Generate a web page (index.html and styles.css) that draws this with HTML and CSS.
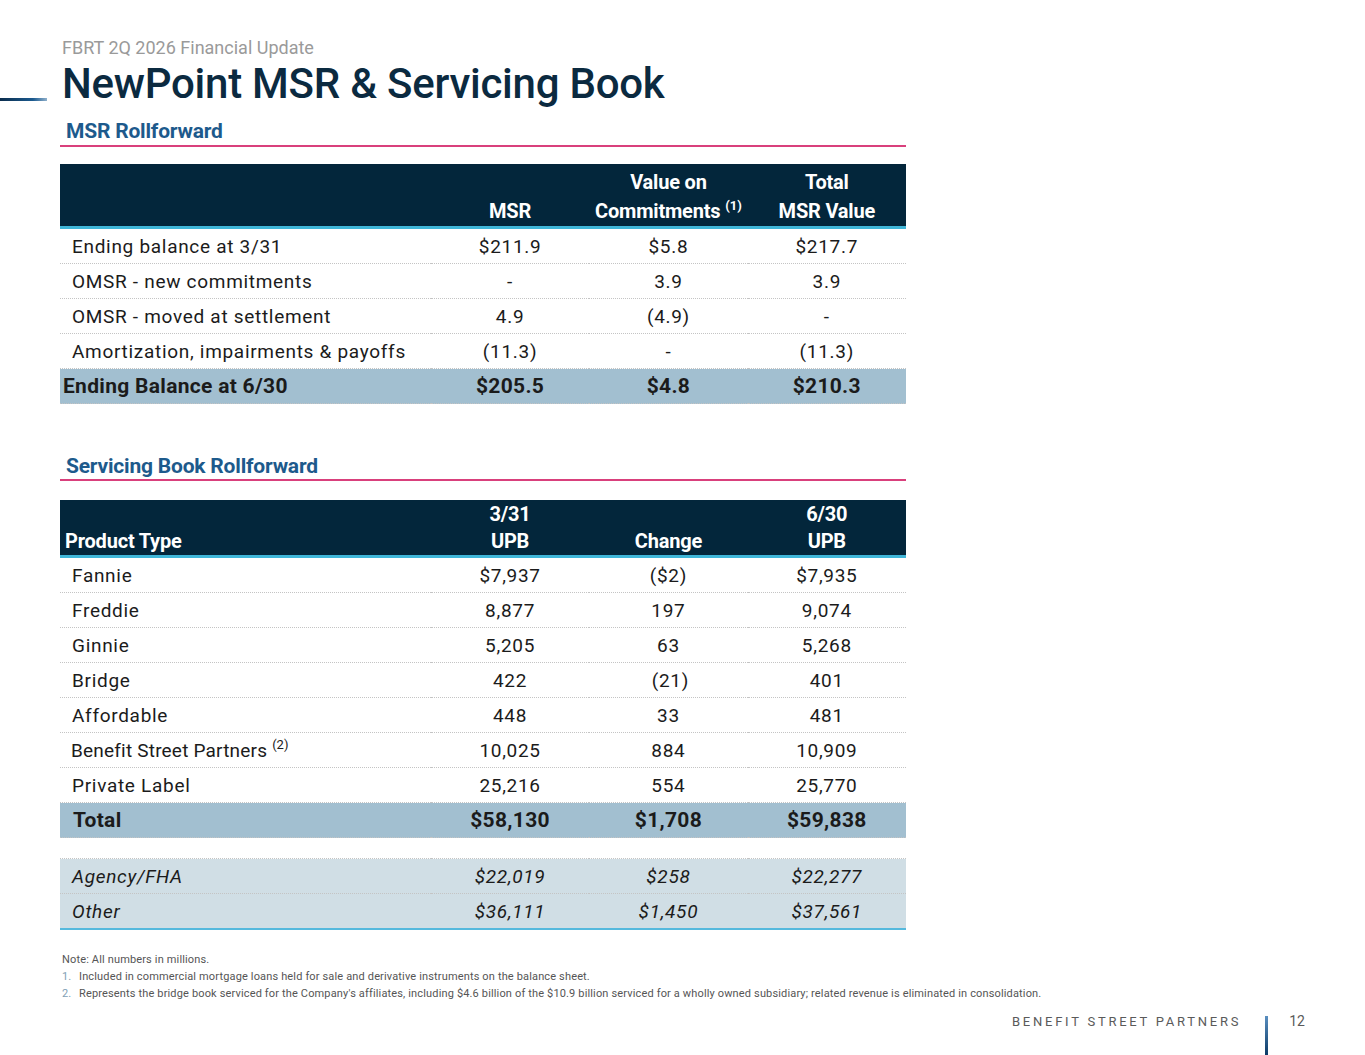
FILE: index.html
```html
<!DOCTYPE html>
<html lang="en">
<head>
    <meta charset="UTF-8">
    <title>NewPoint MSR &amp; Servicing Book</title>
    <link rel="stylesheet" href="styles.css">
</head>
<body>
<div class="page">

    <header class="slide-head">
        <div class="subtitle">FBRT 2Q 2026 Financial Update</div>
        <div class="title-row">
            <div class="title-bar"></div>
            <h1>NewPoint MSR &amp; Servicing Book</h1>
        </div>
    </header>

    <main class="content">

        <!-- MSR table -->
        <h2 class="section-title">MSR Rollforward</h2>
        <table class="data msr">
            <colgroup>
                <col class="c-label"><col class="c-num"><col class="c-num"><col class="c-num">
            </colgroup>
            <thead>
                <tr>
                    <th></th>
                    <th>MSR</th>
                    <th>Value on<br>Commitments <sup>(1)</sup></th>
                    <th>Total<br>MSR Value</th>
                </tr>
            </thead>
            <tbody>
                <tr><td>Ending balance at 3/31</td><td>$211.9</td><td>$5.8</td><td>$217.7</td></tr>
                <tr><td>OMSR - new commitments</td><td>-</td><td>3.9</td><td>3.9</td></tr>
                <tr><td>OMSR - moved at settlement</td><td>4.9</td><td>(4.9)</td><td>-</td></tr>
                <tr><td>Amortization, impairments &amp; payoffs</td><td>(11.3)</td><td>-</td><td>(11.3)</td></tr>
                <tr class="total"><td>Ending Balance at 6/30</td><td>$205.5</td><td>$4.8</td><td>$210.3</td></tr>
            </tbody>
        </table>

        <!-- Servicing book table -->
        <h2 class="section-title second">Servicing Book Rollforward</h2>
        <table class="data book">
            <colgroup>
                <col class="c-label"><col class="c-num"><col class="c-num"><col class="c-num">
            </colgroup>
            <thead>
                <tr>
                    <th class="th-label">Product Type</th>
                    <th>3/31<br>UPB</th>
                    <th>Change</th>
                    <th>6/30<br>UPB</th>
                </tr>
            </thead>
            <tbody>
                <tr><td>Fannie</td><td>$7,937</td><td>($2)</td><td>$7,935</td></tr>
                <tr><td>Freddie</td><td>8,877</td><td>197</td><td>9,074</td></tr>
                <tr><td>Ginnie</td><td>5,205</td><td>63</td><td>5,268</td></tr>
                <tr><td>Bridge</td><td>422</td><td class="nudge">(21)</td><td>401</td></tr>
                <tr><td>Affordable</td><td>448</td><td>33</td><td>481</td></tr>
                <tr><td class="tight">Benefit Street Partners <sup>(2)</sup></td><td>10,025</td><td>884</td><td>10,909</td></tr>
                <tr><td>Private Label</td><td>25,216</td><td>554</td><td>25,770</td></tr>
                <tr class="total"><td>Total</td><td>$58,130</td><td>$1,708</td><td>$59,838</td></tr>
                <tr class="gap"><td colspan="4"></td></tr>
                <tr class="split"><td>Agency/FHA</td><td>$22,019</td><td>$258</td><td>$22,277</td></tr>
                <tr class="split last"><td>Other</td><td>$36,111</td><td>$1,450</td><td>$37,561</td></tr>
            </tbody>
        </table>

        <div class="notes">
            <p>Note: All numbers in millions.</p>
            <p><span class="num">1.</span>Included in commercial mortgage loans held for sale and derivative instruments on the balance sheet.</p>
            <p><span class="num">2.</span>Represents the bridge book serviced for the Company's affiliates, including $4.6 billion of the $10.9 billion serviced for a wholly owned subsidiary; related revenue is eliminated in consolidation.</p>
        </div>
    </main>

    <footer class="slide-foot">
        <span class="brand">BENEFIT STREET PARTNERS</span>
        <span class="foot-bar"></span>
        <span class="page-num">12</span>
    </footer>

</div>
</body>
</html>
```

FILE: styles.css
```css
body {
    margin: 0;
    background-color: #fff;
    font-family: Roboto, "Liberation Sans", sans-serif;
    color: #1b1b1b;
}

.page {
    width: 1365px;
    height: 1055px;
    display: flex;
    flex-direction: column;
    overflow: hidden;
}

/* Slide heading */
.slide-head {
    padding-top: 37px;
}

.subtitle {
    margin-left: 62px;
    font-size: 18px;
    line-height: 22px;
    color: #9a9a9a;
}

.title-row {
    display: flex;
    align-items: flex-end;
}

.title-bar {
    width: 47px;
    height: 3px;
    margin-right: 15px;
    margin-bottom: 8px;
    background: linear-gradient(to right, #0b2d4d, #1b5a8f 70%, #8fb0cc);
}

h1 {
    margin: 0;
    font-size: 42px;
    line-height: 50px;
    font-weight: 500;
    color: #0b2a40;
    letter-spacing: -0.25px;
}

/* Tables */
.content {
    margin-left: 60px;
    width: 846px;
}

.section-title {
    margin: 10px 0 0;
    padding: 0 0 2px 6px;
    font-size: 21px;
    line-height: 24px;
    font-weight: 700;
    color: #1d5a8c;
    border-bottom: 2px solid #d9407c;
    letter-spacing: -0.2px;
}

.section-title.second {
    margin-top: 50px;
    padding-bottom: 1px;
}

table.data {
    width: 846px;
    border-collapse: collapse;
    table-layout: fixed;
    margin-top: 17px;
}

.section-title.second + table.data {
    margin-top: 19px;
}

col.c-label {
    width: 370px;
}

col.c-num {
    width: 158px;
}

table.data th {
    background-color: #03263b;
    color: #fff;
    font-size: 20px;
    line-height: 27px;
    font-weight: 700;
    text-align: center;
    vertical-align: bottom;
    padding: 0;
    border-bottom: 3px solid #3fb6d8;
    letter-spacing: -0.2px;
}

table.msr th {
    height: 62px;
    line-height: 29px;
}

table.book th {
    height: 55px;
}

table.data th.th-label {
    text-align: left;
    padding-left: 5px;
}

table.data th sup,
table.data td sup {
    font-size: 13px;
    font-weight: 400;
    line-height: 0;
    vertical-align: 8px;
    letter-spacing: 0;
}

table.data th sup {
    font-weight: 700;
}

table.data td {
    height: 34px;
    padding: 0;
    font-size: 19px;
    letter-spacing: 0.7px;
    text-align: center;
    border-bottom: 1px dotted #c4c4c4;
}

table.data td:first-child {
    text-align: left;
    padding-left: 12px;
}

table.data td.tight {
    padding-left: 11px;
    letter-spacing: 0.2px;
}

table.data td.nudge {
    padding-left: 4px;
}

tr.total td {
    background-color: #a2bfd0;
    font-size: 21px;
    font-weight: 700;
    letter-spacing: 0.3px;
}

tr.total td:first-child {
    padding-left: 3px;
}

table.book tr.total td:first-child {
    padding-left: 13px;
}

tr.gap td {
    height: 20px;
    background-color: #fff;
}

tr.split td {
    background-color: #d0dee5;
    font-style: italic;
}

tr.split.last td {
    border-bottom: 2px solid #55b9dd;
}

/* Footnotes */
.notes {
    margin-top: 24px;
    margin-left: 2px;
    font-size: 11px;
    letter-spacing: 0.15px;
    color: #555;
}

.notes p {
    margin: 0 0 5px;
    line-height: 12px;
    white-space: nowrap;
}

.notes .num {
    display: inline-block;
    width: 17px;
    color: #7f9fb5;
}

/* Footer */
.slide-foot {
    margin-top: auto;
    height: 39px;
    display: flex;
    justify-content: flex-end;
    align-items: flex-start;
    padding-right: 60px;
}

.brand {
    margin-top: -2px;
    font-size: 13px;
    letter-spacing: 2.75px;
    color: #5a5a5a;
}

.foot-bar {
    width: 3px;
    height: 39px;
    margin: 0 21px 0 24px;
    background: linear-gradient(to bottom, #5a8fc0, #0b3a66);
}

.page-num {
    margin-top: -3px;
    font-size: 14px;
    color: #5a5a5a;
}
```
